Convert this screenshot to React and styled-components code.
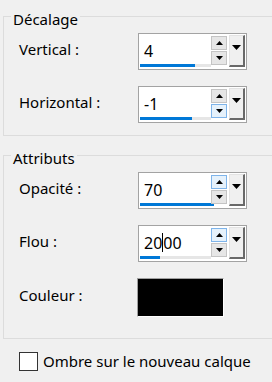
import styled, { createGlobalStyle } from "styled-components";

const GlobalStyle = createGlobalStyle`
  html, body {
    margin: 0;
    background: #f0f0f0;
  }
  body {
    font-family: "Noto Sans", "Liberation Sans", sans-serif;
    font-size: 15px;
    color: #000;
  }
`;

const Panel = styled.div`
  width: 272px;
  height: 382px;
  box-sizing: border-box;
  overflow: hidden;
  padding: 4px 0 0 3px;
`;

const Group = styled.fieldset`
  margin: 0 -20px 0 0;
  border: 1px solid #dcdcdc;
  padding: 5px 0 ${({ $padBottom }) => $padBottom}px 15px;
  min-inline-size: 0;

  & + & {
    margin-top: 7px;
  }
`;

const Legend = styled.legend`
  padding: 6px 2px 0;
  margin-left: -8px;
  line-height: 18px;
`;

const Row = styled.div`
  display: flex;
  align-items: center;

  & + & {
    margin-top: ${({ $gap }) => $gap ?? 15}px;
  }
`;

const Label = styled.span`
  width: 119px;
  flex-shrink: 0;
  line-height: 20px;
  padding-bottom: 6px;
`;

const Spinner = styled.div`
  display: flex;
  width: 109px;
  height: 37px;
  box-sizing: border-box;
  border: 1px solid #a3a3a3;
  background: #fff;
  padding-left: 1px;
`;

const ValueArea = styled.div`
  width: 71px;
  display: flex;
  flex-direction: column;
`;

const Value = styled.div`
  flex: 1;
  display: flex;
  align-items: center;
  padding: 3px 0 0 4px;
  font-size: 16px;
`;

const Caret = styled.span`
  display: inline-block;
  width: 1px;
  height: 19px;
  background: #000;
`;

const Track = styled.div`
  height: 3px;
  margin-bottom: 2px;
  background: #e6e6e6;
`;

const Fill = styled.div`
  height: 100%;
  background: #0078d7;
`;

const SpinCol = styled.div`
  display: flex;
  flex-direction: column;
  gap: 1px;
  width: 16px;
  margin-top: 2px;
`;

const SpinButton = styled.div`
  height: 14px;
  box-sizing: border-box;
  display: flex;
  align-items: center;
  justify-content: center;
  border: 1px solid ${({ $hot }) => ($hot ? "#7eb4ea" : "#c4c4c4")};
  background: ${({ $hot }) => ($hot ? "#e5f1fb" : "#e6e6e6")};
`;

const DropButton = styled.div`
  width: 16px;
  height: 32px;
  margin: 1px 0 0 2px;
  box-sizing: border-box;
  display: flex;
  justify-content: center;
  padding-top: 9px;
  background: #f0f0f0;
  border-top: 1px solid #e3e3e3;
  border-left: 1px solid #e3e3e3;
  border-right: 2px solid #696969;
  border-bottom: 2px solid #696969;
`;

const Swatch = styled.div`
  width: 87px;
  height: 39px;
  margin-left: -1px;
  box-sizing: border-box;
  background: #000;
  border-top: 1px solid #a0a0a0;
  border-left: 1px solid #a0a0a0;
  border-right: 1px solid #fff;
  border-bottom: 1px solid #fff;
`;

const CheckRow = styled.label`
  display: flex;
  align-items: center;
  gap: 5px;
  margin: 12px 0 0 16px;
  line-height: 20px;
`;

const CheckBox = styled.span`
  width: 19px;
  height: 19px;
  box-sizing: border-box;
  border: 1px solid #333;
  background: #fff;
`;

const Arrow = ({ up, w = 7, h = 4 }) => (
  <svg width={w} height={h} viewBox={`0 0 ${w} ${h}`}>
    <polygon
      points={up ? `0,${h} ${w / 2},0 ${w},${h}` : `0,0 ${w},0 ${w / 2},${h}`}
      fill="#000"
    />
  </svg>
);

const NumberField = ({ value, fill, hotUp, hotDown, caretAt }) => (
  <Spinner>
    <ValueArea>
      <Value>
        {caretAt != null ? (
          <>
            {value.slice(0, caretAt)}
            <Caret />
            {value.slice(caretAt)}
          </>
        ) : (
          value
        )}
      </Value>
      <Track>
        <Fill style={{ width: `${fill}px` }} />
      </Track>
    </ValueArea>
    <SpinCol>
      <SpinButton $hot={hotUp}>
        <Arrow up />
      </SpinButton>
      <SpinButton $hot={hotDown}>
        <Arrow />
      </SpinButton>
    </SpinCol>
    <DropButton>
      <Arrow w={9} h={5} />
    </DropButton>
  </Spinner>
);

export default function App() {
  return (
    <>
      <GlobalStyle />
      <Panel>
        <Group $padBottom={12}>
          <Legend>Décalage</Legend>
          <Row>
            <Label>Vertical :</Label>
            <NumberField value="4" fill={55} />
          </Row>
          <Row>
            <Label>Horizontal :</Label>
            <NumberField value="-1" fill={52} hotDown />
          </Row>
        </Group>
        <Group $padBottom={21}>
          <Legend>Attributs</Legend>
          <Row>
            <Label>Opacité :</Label>
            <NumberField value="70" fill={74} hotUp />
          </Row>
          <Row>
            <Label>Flou :</Label>
            <NumberField value="2000" fill={20} hotUp caretAt={2} />
          </Row>
          <Row $gap={16}>
            <Label>Couleur :</Label>
            <Swatch />
          </Row>
        </Group>
        <CheckRow>
          <CheckBox />
          Ombre sur le nouveau calque
        </CheckRow>
      </Panel>
    </>
  );
}
